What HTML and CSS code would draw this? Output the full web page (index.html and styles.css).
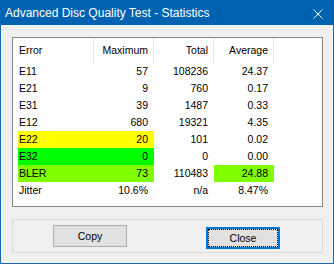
FILE: index.html
```html
<!DOCTYPE html>
<html lang="en">
<head>
  <meta charset="UTF-8" />
  <title>Advanced Disc Quality Test - Statistics</title>
  <link rel="stylesheet" href="styles.css">
</head>
<body>

  <div class="window">
    <!-- Title bar -->
    <div class="titlebar">
      <span class="title">Advanced Disc Quality Test - Statistics</span>
      <svg class="close-x" width="10" height="10" viewBox="0 0 10 10">
        <path d="M0.5 0.5 L9.5 9.5 M9.5 0.5 L0.5 9.5" stroke="#fff" stroke-width="1" fill="none" />
      </svg>
    </div>

    <div class="content">
      <!-- Statistics list -->
      <div class="list">
        <div class="row head">
          <div class="cell">Error</div>
          <div class="cell num">Maximum</div>
          <div class="cell num">Total</div>
          <div class="cell num">Average</div>
        </div>
        <div class="row">
          <div class="cell">E11</div>
          <div class="cell num">57</div>
          <div class="cell num">108236</div>
          <div class="cell num">24.37</div>
        </div>
        <div class="row">
          <div class="cell">E21</div>
          <div class="cell num">9</div>
          <div class="cell num">760</div>
          <div class="cell num">0.17</div>
        </div>
        <div class="row">
          <div class="cell">E31</div>
          <div class="cell num">39</div>
          <div class="cell num">1487</div>
          <div class="cell num">0.33</div>
        </div>
        <div class="row">
          <div class="cell">E12</div>
          <div class="cell num">680</div>
          <div class="cell num">19321</div>
          <div class="cell num">4.35</div>
        </div>
        <div class="row">
          <div class="cell yellow">E22</div>
          <div class="cell num yellow">20</div>
          <div class="cell num">101</div>
          <div class="cell num">0.02</div>
        </div>
        <div class="row">
          <div class="cell green">E32</div>
          <div class="cell num green">0</div>
          <div class="cell num">0</div>
          <div class="cell num">0.00</div>
        </div>
        <div class="row">
          <div class="cell lime">BLER</div>
          <div class="cell num lime">73</div>
          <div class="cell num">110483</div>
          <div class="cell num lime">24.88</div>
        </div>
        <div class="row">
          <div class="cell">Jitter</div>
          <div class="cell num">10.6%</div>
          <div class="cell num">n/a</div>
          <div class="cell num">8.47%</div>
        </div>
      </div>

      <!-- Buttons -->
      <div class="group">
        <button class="btn">Copy</button>
        <button class="btn default">Close</button>
      </div>
    </div>
  </div>

</body>
</html>
```

FILE: styles.css
```css
* {
  box-sizing: border-box;
}

body {
  margin: 0;
  font-family: 'Liberation Sans', Arial, sans-serif;
  font-size: 10.5px;
  color: #000;
  background: #f0f0f0;
}

.window {
  width: 334px;
  height: 264px;
  background: #f0f0f0;
  border: 1px solid #1a69b0;
  border-top: none;
}

/* Title bar */
.titlebar {
  height: 25px;
  margin: 0 -1px;
  padding-left: 5px;
  padding-right: 11px;
  background: #0063b1;
  color: #fff;
  display: flex;
  align-items: center;
}

.title {
  font-size: 12px;
}

.close-x {
  margin-left: auto;
  margin-top: 3px;
}

/* Content */
.content {
  padding: 12px 10px 10px 11px;
}

.list {
  height: 170px;
  background: #fff;
  border: 1px solid #828790;
}

.row {
  display: grid;
  grid-template-columns: 81px 60px 60px 60px;
  height: 17px;
  line-height: 17px;
}

.row .cell:first-child {
  margin-left: 5px;
  padding-left: 1px;
}

.cell {
  white-space: nowrap;
}

.num {
  text-align: right;
  padding-right: 6px;
}

.row.head {
  height: 25px;
  line-height: 25px;
}

.row.head .cell {
  border-right: 1px solid #e5e5e5;
}

.row.head .cell:first-child {
  margin-left: 0;
  padding-left: 6px;
}

.row.head .num {
  padding-right: 5px;
}

.yellow {
  background: #ffff00;
}

.green {
  background: #00ff00;
}

.lime {
  background: #80ff00;
}

/* Button group */
.group {
  margin-top: 12px;
  height: 34px;
  border: 1px solid #dcdcdc;
  display: flex;
  align-items: flex-start;
  gap: 79px;
  padding: 5px 0 0 40px;
}

.btn {
  width: 74px;
  height: 22px;
  padding: 0;
  font-family: inherit;
  font-size: 10.5px;
  color: #000;
  background: #e1e1e1;
  border: 1px solid #adadad;
}

.btn.default {
  margin-top: 2px;
  border: 2px solid #0078d7;
  outline: 1px dotted #000;
  outline-offset: -3px;
}
```
